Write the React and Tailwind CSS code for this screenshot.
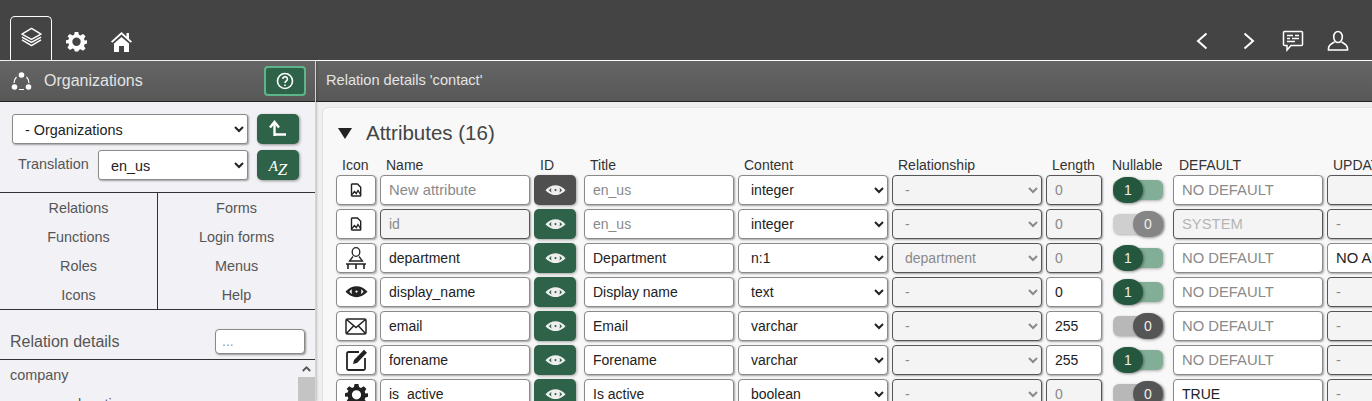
import React from "react";

const font = "font-['Liberation_Sans',Arial,sans-serif]";

const Eye = ({ className = "", size = 21 }) => (
  <svg width={size} height={size * 0.5} viewBox="0 0 24 12" className={className}>
    <path fill="currentColor" fillRule="evenodd" d="M0.500 6 C4 2 8 0.300 12 0.300 C16 0.300 20 2 23.500 6 C20 9.500 16 11.700 12 11.700 C8 11.700 4 9.500 0.500 6Z M7.400 3.300 C6.200 3.800 5.200 4.900 4.600 6 C5.300 6.900 6.300 7.800 7.600 8.500 C6.800 6.800 6.700 4.900 7.400 3.300Z M16.600 3.300 C17.300 4.900 17.200 6.800 16.400 8.500 C17.700 7.800 18.700 6.900 19.400 6 C18.800 4.900 17.800 3.800 16.600 3.300Z M12 4.600 A1.200 1.200 0 1 0 12 7 A1.200 1.200 0 1 0 12 4.600Z" />
  </svg>
);

const ImageFile = () => (
  <svg width="12" height="14" viewBox="0 0 12 14" fill="none" stroke="#222" strokeWidth="1.400">
    <path d="M2 1h5.500L10.700 4.200v8.300a.5.5 0 0 1-.5.5H2a.5.5 0 0 1-.5-.5v-11A.5.5 0 0 1 2 1Z" />
    <path d="M2 11.500l2.500-3 1.800 2 1.700-3 2.500 4" />
  </svg>
);

const Person = () => (
  <svg width="20" height="22" viewBox="0 0 20 22" fill="none" stroke="#222" strokeWidth="1.300">
    <ellipse cx="10" cy="5" rx="3.800" ry="4.300" />
    <path d="M7 9.500 3.500 14h13L13 9.500" />
    <path d="M0 17h20M10 17v5M2 17v5M18 17v5" strokeWidth="1.600" />
  </svg>
);

const Mail = () => (
  <svg width="22" height="17" viewBox="0 0 22 17" fill="none" stroke="#222" strokeWidth="1.500">
    <rect x="1" y="1" width="20" height="15" rx="1.500" />
    <path d="M1.500 1.500 11 9.500l9.500-8M1.500 15.500l7-7.500M20.500 15.500l-7-7.500" />
  </svg>
);

const Edit = () => (
  <svg width="23" height="23" viewBox="0 0 23 23" fill="none">
    <path d="M14 3H3.500A1.500 1.500 0 0 0 2 4.500v15A1.500 1.500 0 0 0 3.500 21h15a1.500 1.500 0 0 0 1.500-1.500V9" stroke="#222" strokeWidth="1.800" />
    <path d="M19 .8 22 3.800 12 14l-4 1 1-4L19 .8Z" fill="#222" />
  </svg>
);

const Gear = ({ size = 22, color = "#fff" }) => (
  <svg width={size} height={size} viewBox="0 0 24 24">
    <path fill={color} fillRule="evenodd" d="M10 1h4l.7 3.300 1.900.8L19.500 3.300l2.800 2.800-1.800 2.900.8 1.900L24 10.600v3.800l-2.700.7-.8 1.900 1.800 2.900-2.800 2.800-2.900-1.800-1.900.8L14 23.500h-4l-.7-2.800-1.900-.8-2.900 1.800-2.800-2.800 1.800-2.900-.8-1.900L0 14.400v-3.800l2.700-.7.800-1.900L1.700 6.100l2.800-2.800L7.400 5.100l1.900-.8L10 1Z M12 7.500a4.800 4.800 0 1 0 0 9.600 4.800 4.800 0 0 0 0-9.600Z" />
  </svg>
);

const Toggle = ({ on, dim }) => (
  <div className="relative w-[50px] h-[26px] shrink-0">
    <div className={`absolute left-0 right-0 top-[3px] h-[20px] rounded-[6px] shadow-[1px_1px_3px_rgba(0,0,0,0.3)] ${on ? "bg-[#82ae97]" : dim ? "bg-[#cfcfcf]" : "bg-[#b8b8b8]"}`} />
    <div className={`absolute top-0 w-[30px] h-[26px] rounded-full flex items-center justify-center text-[14px] text-[#eee] shadow-[1px_1px_3px_rgba(0,0,0,0.4)] ${on ? "left-0 bg-[#25573e]" : dim ? "right-0 bg-[#858585]" : "right-0 bg-[#555555]"}`}>{on ? "1" : "0"}</div>
  </div>
);

const fieldBase = "h-[30px] rounded-[4px] border shadow-[1px_1px_2px_rgba(0,0,0,0.35)] px-[8px] flex items-center shrink-0 overflow-hidden whitespace-nowrap";

const Field = ({ w, text, muted, disabled, faint, wide, className = "" }) => (
  <div className={`${fieldBase} pt-[1px] ${wide ? "text-[14.8px]" : "text-[14px]"} ${disabled ? "bg-[#f4f4f4] border-[#555]" : "bg-white border-[#8a8a8a]"} ${faint ? "text-[#b5b5b5]" : muted ? "text-[#8a8a8a]" : "text-[#222]"} ${className}`} style={{ width: w }}>
    {text}
  </div>
);

const Sel = ({ w, value, disabled }) => (
  <select
    disabled={disabled}
    defaultValue={value}
    className={`h-[30px] rounded-[4px] border shadow-[1px_1px_2px_rgba(0,0,0,0.35)] text-[14px] pl-[8px] shrink-0 ${disabled ? "bg-[#f4f4f4] border-[#555] text-[#8a8a8a] opacity-100" : "bg-white border-[#8a8a8a] text-[#222]"}`}
    style={{ width: w }}
  >
    <option>{value}</option>
  </select>
);

const rows = [
  { icon: <ImageFile />, name: "New attribute", nameMuted: true, idDark: true, title: "en_us", titleMuted: true, content: "integer", rel: "-", len: "0", lenDis: true, on: true, def: "NO DEFAULT", upd: "" },
  { icon: <ImageFile />, name: "id", nameMuted: true, nameDis: true, title: "en_us", titleMuted: true, content: "integer", rel: "-", len: "0", lenDis: true, on: false, dim: true, def: "SYSTEM", defDis: true, upd: "-" },
  { icon: <Person />, name: "department", title: "Department", content: "n:1", rel: "department", len: "0", lenDis: true, on: true, def: "NO DEFAULT", upd: "NO ACTION", updLive: true },
  { icon: <Eye size={23} className="text-[#222]" />, name: "display_name", title: "Display name", content: "text", rel: "-", len: "0", on: true, def: "NO DEFAULT", upd: "-" },
  { icon: <Mail />, name: "email", title: "Email", content: "varchar", rel: "-", len: "255", on: false, def: "NO DEFAULT", upd: "-" },
  { icon: <Edit />, name: "forename", title: "Forename", content: "varchar", rel: "-", len: "255", on: true, def: "NO DEFAULT", upd: "-" },
  { icon: <Gear size={23} color="#222" />, name: "is_active", title: "Is active", content: "boolean", rel: "-", len: "0", lenDis: true, on: false, def: "TRUE", defLive: true, upd: "-" },
];

const Row = ({ r }) => (
  <div className="flex items-center h-[30px] mb-[4px] w-[1100px]">
    <div className={`${fieldBase} bg-white border-[#8a8a8a] w-[40px] justify-center !px-0`}>{r.icon}</div>
    <Field w={150} text={r.name} muted={r.nameMuted} disabled={r.nameDis} wide={r.name === "New attribute"} className="ml-[4px]" />
    <div className={`ml-[4px] w-[42px] h-[30px] rounded-[5px] shrink-0 flex items-center justify-center text-[#eee] shadow-[1px_1px_3px_rgba(0,0,0,0.35)] ${r.idDark ? "bg-[#4f4f4f]" : "bg-[#2e6349]"}`}>
      <Eye />
    </div>
    <Field w={150} text={r.title} muted={r.titleMuted} className="ml-[8px]" />
    <div className="ml-[4px]"><Sel w={150} value={r.content} /></div>
    <div className="ml-[4px]"><Sel w={150} value={r.rel} disabled /></div>
    <Field w={56} text={r.len} muted={r.lenDis} disabled={r.lenDis} className="ml-[4px]" />
    <div className="ml-[11px]"><Toggle on={r.on} dim={r.dim} /></div>
    <Field w={150} text={r.def} muted={!r.defDis && !r.defLive} faint={r.defDis} disabled={r.defDis} wide={!r.defLive} className="ml-[10px]" />
    <Field w={150} text={r.upd} muted={!r.updLive} disabled={!r.updLive} wide className={`ml-[4px] ${r.updLive ? "!bg-white !text-[#222] !border-[#8a8a8a]" : ""}`} />
  </div>
);

const navLeft = ["Relations", "Functions", "Roles", "Icons"];
const navRight = ["Forms", "Login forms", "Menus", "Help"];

const GreenBtn = ({ children, className = "" }) => (
  <div className={`w-[42px] h-[30px] rounded-[5px] bg-[#2e6349] text-white flex items-center justify-center shadow-[1px_1px_3px_rgba(0,0,0,0.4)] shrink-0 ${className}`}>{children}</div>
);

export default function App() {
  return (
    <div className={`${font} w-[1372px] h-[401px] overflow-hidden flex flex-col bg-[#efefef] text-[#333]`}>
      <header className="h-[60px] bg-[#444444] flex items-end justify-between shrink-0 px-[10px]">
        <div className="flex items-end">
          <div className="w-[42px] h-[44px] rounded-t-[5px] border border-b-0 border-white flex items-start justify-center pt-[10px]">
            <svg width="23" height="21" viewBox="0 0 23 22" fill="none" stroke="#fff" strokeWidth="1.500" strokeLinejoin="round">
              <path d="M11.500 1.500 21.500 7.500 11.500 13 1.500 7.500Z" />
              <path d="M1.500 10.500 11.500 16 21.500 10.500" />
              <path d="M1.500 13.500 11.500 19.500 21.500 13.500" />
            </svg>
          </div>
          <div className="ml-[14px] mb-[8px]"><Gear size={21} /></div>
          <div className="ml-[23px] mb-[8px]">
            <svg width="23" height="21" viewBox="0 0 23 21" fill="#fff">
              <path d="M11.500 1 1 10.500l1.300 1.300L11.500 3.600l9.200 8.200 1.300-1.300-3-2.700V2h-2.500v3.600L11.500 1Z" />
              <path d="M4 12.500 11.500 6 19 12.500V21h-5v-6H9v6H4Z" />
            </svg>
          </div>
        </div>
        <div className="flex items-center mb-[8px] pr-[13px] text-white">
          <svg width="22" height="22" viewBox="0 0 22 22" fill="none" stroke="#fff" strokeWidth="2"><path d="M15.500 3.500 7 11l8.500 7.500" /></svg>
          <svg width="22" height="22" viewBox="0 0 22 22" fill="none" stroke="#fff" strokeWidth="2" className="ml-[25px]"><path d="M6.500 3.500 15 11l-8.500 7.500" /></svg>
          <svg width="22" height="22" viewBox="0 0 22 22" fill="none" stroke="#fff" strokeWidth="1.500" className="ml-[22px]">
            <path d="M2.500 1.500h17a1 1 0 0 1 1 1v12a1 1 0 0 1-1 1H9L5 20v-4.500H2.500a1 1 0 0 1-1-1v-12a1 1 0 0 1 1-1Z" />
            <path d="M5 5.500h6M13 5.500h4M5 8.500h3M10 8.500h7M5 11.500h8" />
          </svg>
          <svg width="22" height="22" viewBox="0 0 22 22" fill="none" stroke="#fff" strokeWidth="1.600" className="ml-[23px]">
            <ellipse cx="11" cy="7" rx="4.300" ry="5.500" />
            <path d="M7.500 12c-2.500 1.500-6 2.500-6 6.500v1.500h19v-1.500c0-4-3.500-5-6-6.500" />
          </svg>
        </div>
      </header>
      <div className="flex flex-1 min-h-0 border-t border-white">
        <aside className="w-[316px] shrink-0 bg-[#f2f1f5] flex flex-col shadow-[1px_0_2px_rgba(0,0,0,0.2)] z-10 border-r border-[#d4d4d4]">
          <div className="h-[41px] shrink-0 bg-gradient-to-b from-[#656565] to-[#585858] border-b border-[#222] flex items-center justify-between pl-[11px] pr-[9px]">
            <div className="flex items-center">
              <svg width="21" height="21" viewBox="0 0 21 21" fill="none">
                <circle cx="10.500" cy="4" r="2.800" fill="#fff" />
                <circle cx="3.500" cy="16" r="2.800" fill="#fff" />
                <circle cx="17.500" cy="16" r="2.800" fill="#fff" />
                <path d="M5.500 6a8.500 8.500 0 0 0-2.500 6M15.500 6a8.500 8.500 0 0 1 2.500 6M8 18.500h5" stroke="#fff" strokeWidth="1.200" />
              </svg>
              <span className="ml-[12px] text-[16px] text-[#e4e4e4]">Organizations</span>
            </div>
            <div className="w-[42px] h-[30px] rounded-[4px] border-2 border-[#5fb58a] bg-[#2e6349] flex items-center justify-center">
              <svg width="18" height="18" viewBox="0 0 18 18" fill="none" stroke="#fff" strokeWidth="1.600">
                <circle cx="9" cy="9" r="7.500" />
                <path d="M6.800 7a2.300 2.300 0 1 1 3.500 2c-.9.500-1.300 1-1.300 2" />
                <path d="M9 12.500v1.500" />
              </svg>
            </div>
          </div>
          <div className="h-[91px] shrink-0 border-b border-[#333] pl-[12px] pr-[16px] pt-[12px] flex flex-col gap-[6px]">
            <div className="flex items-center">
              <select defaultValue="- Organizations" className="w-[236px] h-[30px] rounded-[3px] border border-[#8a8a8a] bg-white shadow-[1px_1px_2px_rgba(0,0,0,0.35)] text-[14.4px] text-[#222] pl-[8px] pt-[1px]"><option>- Organizations</option></select>
              <GreenBtn className="ml-auto">
                <svg width="18" height="18" viewBox="0 0 18 18" fill="none" stroke="#fff" strokeWidth="2.400">
                  <path d="M5.500 16V3M1 7.500 5.500 2l4.500 5.500M5.500 14.500H17" />
                </svg>
              </GreenBtn>
            </div>
            <div className="flex items-center">
              <span className="ml-[6px] w-[80px] text-[14.4px] text-[#555]">Translation</span>
              <select defaultValue="en_us" className="w-[150px] h-[30px] rounded-[3px] border border-[#8a8a8a] bg-white shadow-[1px_1px_2px_rgba(0,0,0,0.35)] text-[14.4px] text-[#222] pl-[8px] pt-[1px]"><option>en_us</option></select>
              <GreenBtn className="ml-auto">
                <span className="font-['Liberation_Serif',serif] italic text-[15px] leading-none font-normal">A<span className="relative top-[4px] text-[17px]">Z</span></span>
              </GreenBtn>
            </div>
          </div>
          <div className="h-[117px] shrink-0 border-b border-[#333] flex text-[14.4px] text-[#555]">
            <div className="w-[158px] border-r border-[#333] flex flex-col items-center pt-[1px]">
              {navLeft.map((t) => <div key={t} className="h-[29px] leading-[29px]">{t}</div>)}
            </div>
            <div className="flex-1 flex flex-col items-center pt-[1px]">
              {navRight.map((t) => <div key={t} className="h-[29px] leading-[29px]">{t}</div>)}
            </div>
          </div>
          <div className="h-[50px] shrink-0 border-b border-[#333] flex items-end justify-between pl-[10px] pr-[10px] pb-[5px]">
            <span className="text-[16px] text-[#555] leading-[25px]">Relation details</span>
            <div className="w-[90px] h-[25px] rounded-[4px] border border-[#8a8a8a] bg-white shadow-[1px_1px_2px_rgba(0,0,0,0.4)] text-[14px] text-[#999] px-[6px] flex items-center">...</div>
          </div>
          <div className="flex-1 min-h-0 flex">
            <div className="flex-1 text-[14.4px] text-[#555] pl-[10px] pt-[5px]">
              <div className="h-[29px]">company</div>
              <div className="pl-[68px]">location</div>
            </div>
            <div className="w-[17px] shrink-0 flex flex-col">
              <div className="h-[17px] flex items-center justify-center">
                <svg width="9" height="6" viewBox="0 0 9 6" fill="none" stroke="#555" strokeWidth="1.800"><path d="M.8 5 4.500 1.300 8.200 5" /></svg>
              </div>
              <div className="flex-1 bg-[#c4c4c4]" />
            </div>
          </div>
        </aside>
        <main className="flex-1 min-w-0 flex flex-col">
          <div className="h-[41px] shrink-0 bg-gradient-to-b from-[#656565] to-[#585858] border-b border-[#222] flex items-center pl-[10px] text-[14.6px] text-[#e4e4e4]">
            Relation details 'contact'
          </div>
          <div className="flex-1 min-h-0 pl-[6px] pt-[5px] overflow-hidden">
            <div className="h-[400px] w-[1200px] rounded-[6px] border border-[#e2e2e2] bg-[#f8f8f8] pl-[13px] pt-[13px]">
              <div className="flex items-center h-[24px]">
                <svg width="14" height="11" viewBox="0 0 14 11" className="ml-[2px] mr-[14px]"><path d="M0 0h14L7 11Z" fill="#222" /></svg>
                <span className="text-[20.500px] text-[#444]">Attributes (16)</span>
              </div>
              <div className="flex h-[20px] items-start leading-[20px] text-[14px] text-[#333] mt-[10px] w-[1100px]">
                <span className="w-[44px] pl-[6px]">Icon</span>
                <span className="w-[154px] pl-[6px]">Name</span>
                <span className="w-[50px] pl-[6px]">ID</span>
                <span className="w-[154px] pl-[6px]">Title</span>
                <span className="w-[154px] pl-[6px]">Content</span>
                <span className="w-[154px] pl-[6px]">Relationship</span>
                <span className="w-[60px] pl-[6px]">Length</span>
                <span className="w-[67px] pl-[6px]">Nullable</span>
                <span className="w-[154px] pl-[6px]">DEFAULT</span>
                <span className="w-[60px] pl-[6px]">UPDATE</span>
              </div>
              {rows.map((r) => <Row key={r.name} r={r} />)}
            </div>
          </div>
        </main>
      </div>
    </div>
  );
}
